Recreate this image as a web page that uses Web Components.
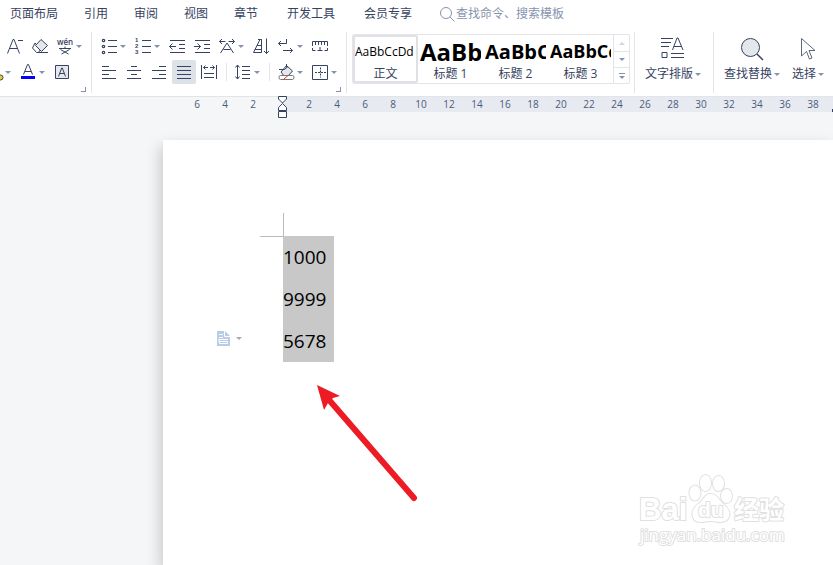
<!DOCTYPE html>
<html lang="zh-CN">
<head>
<meta charset="utf-8">
<title>文档编辑器</title>
<style>
html, body { height: 100%; }
body {
  margin: 0;
  overflow: hidden;
  font: 12px/16px "Open Sans", "Noto Sans CJK SC", sans-serif;
  --ink: #36425f;
  --muted: #8793ae;
  --line: #e3e5e9;
  --desk: #f5f6f8;
}
</style>
</head>
<body>
<writer-app>
  <writer-tabs slot="tabs">
    <writer-tab>页面布局</writer-tab>
    <writer-tab>引用</writer-tab>
    <writer-tab>审阅</writer-tab>
    <writer-tab>视图</writer-tab>
    <writer-tab>章节</writer-tab>
    <writer-tab>开发工具</writer-tab>
    <writer-tab>会员专享</writer-tab>
    <writer-search slot="search"></writer-search>
  </writer-tabs>

  <tool-group slot="ribbon" class="font" launcher>
    <tool-row>
      <tool-button icon="shrink" label="减小字号"></tool-button>
      <tool-button icon="eraser" label="清除格式"></tool-button>
      <tool-button icon="pinyin" label="拼音指南" menu></tool-button>
    </tool-row>
    <tool-row class="inset">
      <tool-button icon="marker" label="突出显示" menu></tool-button>
      <tool-button icon="color" label="字体颜色" menu></tool-button>
      <tool-button icon="shade" label="字符底纹"></tool-button>
    </tool-row>
  </tool-group>

  <tool-group slot="ribbon" class="para" launcher>
    <tool-row>
      <tool-button icon="bullets" label="项目符号" menu></tool-button>
      <tool-button icon="numbers" label="编号" menu></tool-button>
      <tool-button icon="outdent" label="减少缩进量"></tool-button>
      <tool-button icon="indent" label="增加缩进量"></tool-button>
      <tool-button icon="scale" label="中文版式" menu></tool-button>
      <tool-button icon="sort" label="排序"></tool-button>
      <tool-button icon="marks" label="显示编辑标记" menu></tool-button>
      <tool-button icon="tabstops" label="制表位"></tool-button>
    </tool-row>
    <tool-row>
      <tool-button icon="left" label="左对齐"></tool-button>
      <tool-button icon="center" label="居中对齐"></tool-button>
      <tool-button icon="right" label="右对齐"></tool-button>
      <tool-button icon="justify" label="两端对齐" active></tool-button>
      <tool-button icon="spread" label="分散对齐"></tool-button>
      <tool-divider></tool-divider>
      <tool-button icon="spacing" label="行距" menu></tool-button>
      <tool-divider></tool-divider>
      <tool-button icon="fill" label="底纹颜色" menu></tool-button>
      <tool-button icon="borders" label="边框" menu></tool-button>
    </tool-row>
  </tool-group>

  <tool-group slot="ribbon" class="styles">
    <style-gallery>
      <style-card level="body" sample="AaBbCcDd" active>正文</style-card>
      <style-card level="h1" sample="AaBb">标题 1</style-card>
      <style-card level="h2" sample="AaBbC">标题 2</style-card>
      <style-card level="h3" sample="AaBbCc">标题 3</style-card>
    </style-gallery>
  </tool-group>

  <tool-group slot="ribbon" class="big">
    <big-tool icon="typeset">文字排版</big-tool>
  </tool-group>
  <tool-group slot="ribbon" class="big last">
    <big-tool icon="find">查找替换</big-tool>
    <big-tool icon="pointer">选择</big-tool>
  </tool-group>

  <writer-ruler slot="ruler"></writer-ruler>

  <writer-desk slot="desk">
    <writer-page>
      <p>1000</p>
      <p>9999</p>
      <p>5678</p>
    </writer-page>
    <red-arrow slot="overlay"></red-arrow>
    <site-mark slot="overlay"></site-mark>
  </writer-desk>
</writer-app>

<script>
const ICONS = {
  shrink: '<path d="M1.500 16.500 7 2.500h1l5.500 14M3.500 11.500h8M12 3.500h5"/>',
  eraser: '<path d="M4 6 9.500 12.500 7.500 15.500H5.500L1.500 11z" fill="#fff"/><path d="M4.500 8.500 10 2.500 16.500 8.500 10.500 14.500z" fill="#e4e7ec"/><path d="M6 15.500h11"/>',
  pinyin: '<text x="9" y="8" text-anchor="middle" font-size="8" font-weight="600">wén</text><path d="M3 11.500h12M9 9.500v2M4.500 12.500l8 4.500M13.500 12.500l-8 4.500"/>',
  marker: '<path d="M5 12 12 5l3 3-5 5z"/><circle cx="15.500" cy="14.500" r="2.500" fill="#e6d51f"/>',
  color: '<path d="M4.500 11.500 8.500 1.500h1l4 10M6 8.500h6"/><path d="M2 14.500h14" stroke="#00f" stroke-width="3"/>',
  shade: '<path d="M2.500 2.500h13v13h-13z" fill="#e4e7ec"/><path d="M5.500 13.500 8.700 5h.6l3.200 8.500M6.500 10.500h5"/>',
  bullets: '<path d="M8 3.500h9M8 9.500h9M8 15.500h9"/><g stroke-width="1.200"><circle cx="3.500" cy="3.500" r="1.200"/><circle cx="3.500" cy="9.500" r="1.200"/><circle cx="3.500" cy="15.500" r="1.200"/></g>',
  numbers: '<path d="M8 3.500h9M8 9.500h9M8 15.500h9"/><g class="digits" font-size="6" font-weight="700"><text x="1" y="5">1</text><text x="1" y="11">2</text><text x="1" y="17">3</text></g>',
  outdent: '<path d="M2 3.500h15M11 7.500h6M11 11.500h6M2 15.500h15M1.500 9.500H8M4.500 6.500l-3 3 3 3"/>',
  indent: '<path d="M2 3.500h15M11 7.500h6M11 11.500h6M2 15.500h15M1 9.500h6.500M4.500 6.500l3 3-3 3"/>',
  scale: '<path d="M1.500 4.500h6M10.500 4.500h6M4 2 1.500 4.500 4 7M14 2l2.500 2.500L14 7M2.500 16 9 6l6.500 10M5.500 12.500h7"/>',
  sort: '<path d="M1.500 15.500 8 2.500h1.500v13z" fill="#fff"/><path d="M6 2.500h3.500M5 8.500h4.500M3 12.500h6.500M14.500 1.500v15M12 14l2.500 2.500L17 14"/>',
  marks: '<path d="M9.500 2v4.500h-8M4 4 1.500 6.500 4 9M6 13.500h9.500M13 11l2.500 2.500L13 16"/>',
  tabstops: '<path d="M1.500 9V4.500h15V9M4.500 5v3M7.500 5v3M10.500 5v3M13.500 5v3M1.500 11v2.500h3M9 10v3.500M6.500 13.500h5M16.500 11v2.500h-3"/>',
  left: '<path d="M2 3.500h7M2 7.500h14M2 11.500h7M2 15.500h14"/>',
  center: '<path d="M6 3.500h6M2 7.500h14M6 11.500h6M2 15.500h14"/>',
  right: '<path d="M9 3.500h7M2 7.500h14M9 11.500h7M2 15.500h14"/>',
  justify: '<path d="M2 3.500h14M2 7.500h14M2 11.500h14M2 15.500h14"/>',
  spread: '<path d="M1.500 2v14M16.500 2v14M3.500 4.500H8M10 4.500h4.500M5.500 2.500l-2 2 2 2M12.500 2.500l2 2-2 2M4 10.500h10M4 14.500h10"/>',
  spacing: '<path d="M3.500 2v14M1.500 4.500l2-2.500 2 2.500M1.500 13.500l2 2.500 2-2.500M8 3.500h8M8 7.500h8M8 11.500h8M8 15.500h8"/>',
  fill: '<path d="M4 9 9.500 2.500 15.500 8 11 13H7z" fill="#e4e7ec"/><path d="M2 6.500h5.500L11 3.500M9.500 1v3"/><path d="M3.500 12.500h12q1.500 0 1.500 2t-1.500 2h-12q-1.500 0-1.500-2t1.500-2z" fill="#fff" stroke="#777"/><path d="m7 16 4-3.500" stroke="#e33"/>',
  borders: '<path d="M1.500 2.500h15v14h-15z"/><path d="M9.500 4.500v10M4 9.500h11" stroke-dasharray="2 1"/>',
  typeset: '<path d="M0 1.500h12M0 5.500h10M0 9.500h8M1 15.500h5v5H1zM10 16.500h13M10 20.500h13M11.500 13 16 1h1l5 12M13 9.500h7.500"/>',
  find: '<circle cx="10.500" cy="10.500" r="9" fill="#e4e7ec"/><path d="m17 17 6 6" stroke-width="1.500"/>',
  pointer: '<path d="M5.500 1.500v17.500l5-4.500 3 7.500 2.500-1-3-7.500h6z" stroke="#5c677f"/>'
};
const svg = (name, size) =>
  `<svg viewBox="0 0 ${size} ${size}" width="${size}" height="${size}" aria-hidden="true">${ICONS[name]}</svg>`;
const ICON_CSS = `
  svg { display: block; flex: none; overflow: visible; fill: none; stroke: var(--ink); stroke-width: 1; }
  svg text { fill: var(--ink); stroke: none; font-family: "Open Sans", sans-serif; }
  svg .digits text { font-family: "Liberation Sans", sans-serif; }
  button { font: inherit; color: inherit; background: none; border: 0; padding: 0; margin: 0; }
  .caret { flex: none; border: 3px solid transparent; border-top-color: var(--muted); border-bottom: 0; }
`;

function define(name, render) {
  customElements.define(name, class extends HTMLElement {
    connectedCallback() {
      if (!this.shadowRoot) this.attachShadow({ mode: 'open' }).innerHTML = render(this);
    }
  });
}

define('writer-app', () => `
  <style>
    :host { display: flex; flex-direction: column; height: 100vh; color: var(--ink); background: var(--desk); }
    .ribbon { display: flex; background: #fff; padding: 2px 0 3px; border-bottom: 1px solid #e2e4e8; overflow: hidden; }
    main { flex: 1; display: flex; min-height: 0; }
  </style>
  <slot name="tabs"></slot>
  <div class="ribbon" role="toolbar"><slot name="ribbon"></slot></div>
  <slot name="ruler"></slot>
  <main><slot name="desk"></slot></main>`);

define('writer-tabs', () => `
  <style>
    :host { display: flex; align-items: center; background: #fff; height: 30px; padding: 0 10px; box-sizing: border-box; overflow: hidden; }
    nav { display: flex; gap: 26px; margin-right: 28px; }
    ::slotted(writer-tab:nth-child(n+6)) { padding-left: 3px; }
  </style>
  <nav><slot></slot></nav><slot name="search"></slot>`);

define('writer-tab', () => `
  <style>${ICON_CSS} :host { display: block; } button { display: block; padding-bottom: 2px; white-space: nowrap; }</style>
  <button type="button"><slot></slot></button>`);

define('writer-search', () => `
  <style>
    :host { display: block; flex: 1; }
    label { display: flex; align-items: center; gap: 1px; padding-bottom: 2px; }
    svg { flex: none; fill: none; stroke: var(--muted); }
    input { flex: 1; min-width: 0; font: inherit; color: inherit; border: 0; padding: 0; background: none; outline: 0; }
    input::placeholder { color: var(--muted); opacity: 1; }
  </style>
  <label><svg width="15" height="16" viewBox="0 0 15 16" aria-hidden="true"><circle cx="6" cy="7" r="5.500"/><path d="m10 11 4.500 4.500"/></svg>
  <input type="search" aria-label="查找命令" placeholder="查找命令、搜索模板"></label>`);

define('tool-group', el => `
  <style>
    :host { display: flex; flex-direction: column; gap: 2px; flex: none; position: relative; padding: 2px 0 6px; border-right: 1px solid var(--line); min-height: 53px; }
    :host(.font) { width: 91px; align-items: flex-end; --row-end: 4px; }
    :host(.para) { padding-left: 5px; width: 249px; }
    :host(.styles) { padding-left: 5px; padding-right: 4px; }
    :host(.big) { flex-direction: row; gap: 12px; padding-left: 10px; padding-right: 12px; }
    :host(.last) { border-right: 0; }
    .launch { position: absolute; right: 5px; bottom: 1px; width: 5px; height: 5px; padding: 0; background: none; border: solid var(--muted); border-width: 0 1px 1px 0; }
  </style>
  <slot></slot>${el.hasAttribute('launcher') ? '<button class="launch" type="button" aria-label="更多设置"></button>' : ''}`);

define('tool-row', () => `
  <style>
    :host { display: flex; align-items: center; height: 24px; padding-right: var(--row-end, 0); }
    :host(.inset) { padding-right: 16px; }
  </style><slot></slot>`);

define('tool-divider', () => `
  <style>:host { width: 1px; height: 18px; margin: 0 4px; background: var(--line); flex: none; }</style>`);

define('tool-button', el => `
  <style>${ICON_CSS}
    :host { display: block; flex: none; width: 25px; }
    :host([menu]) { width: 34px; }
    button { display: flex; align-items: center; height: 24px; padding: 0 3px; border-radius: 2px; }
    :host([active]) button { background: #dde2e8; }
    .caret { margin-left: 2px; }
  </style>
  <button type="button" aria-label="${el.getAttribute('label')}" title="${el.getAttribute('label')}">
    ${svg(el.getAttribute('icon'), 18)}${el.hasAttribute('menu') ? '<span class="caret"></span>' : ''}
  </button>`);

define('big-tool', el => `
  <style>${ICON_CSS}
    :host { display: block; flex: none; }
    button { display: flex; flex-direction: column; align-items: center; gap: 5px; padding-top: 3px; }
    span { display: flex; align-items: center; gap: 2px; white-space: nowrap; }
  </style>
  <button type="button">${svg(el.getAttribute('icon'), 24)}<span><slot></slot><i class="caret"></i></span></button>`);

define('style-gallery', () => `
  <style>${ICON_CSS}
    :host { display: flex; border: 1px solid var(--line); border-radius: 2px; box-sizing: border-box; height: 50px; margin-bottom: auto; }
    .scroll { display: grid; grid-template-rows: repeat(3, 1fr); width: 15px; border-left: 1px solid var(--line); }
    .scroll button { display: grid; place-content: center; justify-items: center; gap: 2px; }
    .scroll button + button { border-top: 1px solid var(--line); }
    .up { border: 3px solid transparent; border-bottom-color: #cfd5e1; border-top: 0; }
    .bar { width: 6px; height: 1px; background: var(--muted); }
  </style>
  <slot></slot>
  <div class="scroll">
    <button type="button" aria-label="上一行"><i class="up"></i></button>
    <button type="button" aria-label="下一行"><i class="caret"></i></button>
    <button type="button" aria-label="全部样式"><i class="bar"></i><i class="caret"></i></button>
  </div>`);

define('style-card', el => `
  <style>${ICON_CSS}
    :host { display: block; width: 65px; flex: none; }
    button { display: flex; flex-direction: column; align-items: center; width: 100%; height: 48px; box-sizing: border-box; border: 2px solid transparent; border-radius: 2px; overflow: hidden; }
    :host([active]) button { border-color: #dfe1e6; }
    .sample { align-self: stretch; display: block; height: 29px; line-height: 29px; overflow: hidden; white-space: nowrap; text-align: left; color: #000; font-weight: 700; }
    .label { line-height: 15px; }
    .body { font-size: 12px; font-weight: 400; }
    .h1 { font-size: 24px; }
    .h2 { font-size: 20px; }
    .h3 { font-size: 18px; }
  </style>
  <button type="button"><span class="sample ${el.getAttribute('level')}">${el.getAttribute('sample')}</span><span class="label"><slot></slot></span></button>`);

const ticks = (from, to) => {
  const out = [];
  for (let n = from; from < to ? n <= to : n >= to; n += from < to ? 2 : -2) out.push(`<span>${n}</span>`);
  return out.join('');
};
define('writer-ruler', () => `
  <style>
    :host { display: flex; position: relative; flex: none; height: 15px; font-size: 10px; line-height: 15px; color: #4c5a7a; }
    div { display: flex; box-sizing: border-box; overflow: hidden; }
    .before { width: 282px; justify-content: flex-end; padding-right: 15px; }
    .after { flex: 1; min-width: 0; padding-left: 13px; background: #e7eaf0; }
    span { flex: none; width: 28px; text-align: center; }
    svg { position: absolute; left: 277px; top: -1px; fill: #fff; stroke: var(--ink); }
    .end { position: absolute; right: 0; bottom: 0; width: 1px; height: 3px; background: var(--ink); }
  </style>
  <div class="before">${ticks(6, 2)}</div><div class="after">${ticks(2, 38)}</div>
  <svg width="11" height="24" viewBox="0 0 11 24" aria-hidden="true"><path d="M1.500 .5h8v2.500l-4 4-4-4zM5.500 7.500l4 4v3h-8v-3zM1.500 15.500h8v6h-8z"/></svg>
  <i class="end"></i>`);

define('writer-desk', () => `
  <style>
    :host { flex: 1; display: flex; position: relative; overflow: hidden; padding: 28px 0 0 163px; }
  </style><slot></slot><slot name="overlay"></slot>`);

define('writer-page', () => `
  <style>
    :host { flex: 1; position: relative; background: #fff; padding: 96px 120px; box-shadow: -3px 6px 14px rgba(0, 0, 0, .18); color: #000; }
    .selection { width: 51px; background: #c8c8c8; font-size: 19px; line-height: 42px; }
    ::slotted(p) { margin: 0; }
    .crop { position: absolute; left: 97px; top: 73px; width: 23px; height: 23px; border: solid #bbb; border-width: 0 1px 1px 0; }
    button { position: absolute; left: 54px; top: 191px; display: flex; align-items: center; gap: 6px; border: 0; padding: 0; background: none; }
    i { border: 3px solid transparent; border-top-color: #aaa; border-bottom: 0; }
  </style>
  <span class="crop"></span>
  <div class="selection"><slot></slot></div>
  <button type="button" aria-label="段落布局">
    <svg width="13" height="15" viewBox="0 0 13 15" aria-hidden="true"><path d="M0 0h8l5 5v10H0z" fill="#b8cce8"/><path d="M7.500 0v5.500H13M2 3.500h4M2 6.500h4M2 8.500h9M2.500 10.500h8v2h-8zM2 8v3" fill="none" stroke="#fff"/></svg><i></i>
  </button>`);

define('red-arrow', () => `
  <style>:host { position: absolute; left: 316px; top: 273px; } svg { display: block; }</style>
  <svg width="102" height="118" viewBox="0 0 102 118" aria-hidden="true">
    <path d="M14 16 98 113" stroke="#ed1c24" stroke-width="6" stroke-linecap="round"/>
    <path d="M1 0 24 11 17 13 12 18 8 25z" fill="#ed1c24"/>
  </svg>`);

define('site-mark', () => `
  <style>
    :host { position: absolute; right: 44px; bottom: 16px; }
    svg { display: block; fill: #fff; stroke: #e0e0e0; stroke-width: 2; paint-order: stroke; stroke-linejoin: round; }
    text { font-family: "Liberation Sans", "Noto Sans CJK SC", sans-serif; }
    .url { font-family: "Open Sans", sans-serif; }
  </style>
  <svg width="152" height="76" viewBox="0 0 152 76" role="img" aria-label="Baidu 经验">
    <text x="2" y="47" font-size="31" font-weight="700">Bai</text>
    <g stroke-width="2"><ellipse cx="58" cy="20" rx="5.500" ry="7.500"/><ellipse cx="68.500" cy="10" rx="5.500" ry="8"/><ellipse cx="81.500" cy="10.500" rx="5.500" ry="7.500"/><ellipse cx="89.500" cy="23" rx="5.500" ry="7"/>
    <path d="M73.500 21c6 0 8 5 12 9s7 7 7 11c0 5-4 8-9 8-4 0-6-1-10-1s-6 1-10 1c-5 0-8-3-8-8s3-8 7-11 5-9 11-9z"/></g>
    <text x="61" y="44" font-size="21" font-weight="700">du</text>
    <text x="97" y="46" font-size="25" font-weight="700">经验</text>
    <text class="url" x="3" y="68" font-size="17">jingyan.baidu.com</text>
  </svg>`);
</script>
</body>
</html>
